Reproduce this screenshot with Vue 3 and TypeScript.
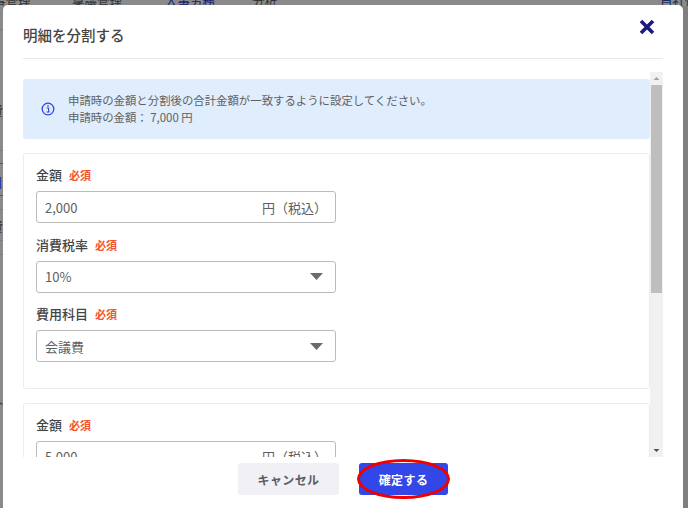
<script setup lang="ts">
interface Field {
  label: string
  value: string
  kind: 'input' | 'select'
}
const first: Field[] = [
  { label: '金額', value: '2,000', kind: 'input' },
  { label: '消費税率', value: '10%', kind: 'select' },
  { label: '費用科目', value: '会議費', kind: 'select' },
]
const second: Field[] = [{ label: '金額', value: '5,000', kind: 'input' }]
const cards = [first, second]
const tabs = ['事管理', '稟議管理', '人事労務', '分析', '自社情報']
const backLines = [
  { y: 29, c: '#7c7c7c' },
  { y: 150, c: '#7c7c7c' },
  { y: 163, c: '#4a55a8' },
  { y: 195, c: '#4a55a8' },
  { y: 209, c: '#7c7c7c' },
  { y: 240, c: '#7c7c7c' },
  { y: 254, c: '#7c7c7c' },
]
const backGlyphs = [
  { y: 102, t: '費', c: '#3a3a3a' },
  { y: 174, t: '目', c: '#2230b0' },
  { y: 218, t: '費', c: '#3a3a3a' },
  { y: 322, t: '^', c: '#3a3a3a' },
  { y: 397, t: '介', c: '#3a3a3a' },
]
</script>

<template>
  <div class="page">
    <nav class="tabs">
      <span v-for="(t, i) in tabs" :key="t" class="tab" :class="'tab' + i">{{ t }}</span>
    </nav>
    <div v-for="l in backLines" :key="l.y" class="back-line" :style="{ top: l.y + 'px', background: l.c }"></div>
    <span v-for="g in backGlyphs" :key="g.y" class="back-glyph" :style="{ top: g.y + 'px', color: g.c }">{{ g.t }}</span>
    <div class="right-strip"></div>
    <section class="modal">
      <header class="head">
        <h2 class="title">明細を分割する</h2>
        <svg class="close" width="16" height="16" viewBox="0 0 16 16">
          <path d="M2 2 L14 14 M14 2 L2 14" stroke="#1a1a80" stroke-width="3.6" fill="none" />
        </svg>
      </header>
      <div class="body">
        <div class="scroll">
          <div class="alert">
            <svg class="info" width="14" height="14" viewBox="0 0 14 14">
              <circle cx="7" cy="7" r="5.8" fill="none" stroke="#3346e8" stroke-width="1.3" />
              <rect x="6.3" y="3.2" width="1.4" height="1.5" fill="#3346e8" />
              <path d="M5.6 6 H7.6 V9.8 H8.6 M5.5 10 H8.6" stroke="#3346e8" stroke-width="1.1" fill="none" />
            </svg>
            <div class="alert-text">
              <p>申請時の金額と分割後の合計金額が一致するように設定してください。</p>
              <p>申請時の金額： 7,000 円</p>
            </div>
          </div>
          <div v-for="(card, c) in cards" :key="c" class="card">
            <div v-for="f in card" :key="f.label" class="field">
              <div class="label">{{ f.label }}<span class="req">必須</span></div>
              <div class="control">
                <span>{{ f.value }}</span>
                <span v-if="f.kind === 'input'" class="unit">円（税込）</span>
                <svg v-else class="caret" width="13" height="7" viewBox="0 0 13 7">
                  <path d="M0 0 H13 L6.5 7 Z" fill="#6b6b6b" />
                </svg>
              </div>
            </div>
          </div>
        </div>
        <div class="bar">
          <svg class="arrow" width="13" height="13" viewBox="0 0 13 13"><path d="M3.5 8 H9.5 L6.5 5 Z" fill="#a3a3a3" /></svg>
          <div class="track"><div class="thumb"></div></div>
          <svg class="arrow" width="13" height="13" viewBox="0 0 13 13"><path d="M3.5 5 H9.5 L6.5 8 Z" fill="#505050" /></svg>
        </div>
      </div>
      <footer class="foot">
        <button class="btn cancel">キャンセル</button>
        <button class="btn ok">確定する<span class="ring"></span></button>
      </footer>
    </section>
  </div>
</template>

<style scoped>
.page {
  position: relative;
  width: 688px;
  height: 508px;
  overflow: hidden;
  background: #8a8a8a;
  font-family: "Noto Sans CJK JP", "Noto Sans", sans-serif;
}
.tabs {
  position: absolute;
  top: -6px;
  left: 0;
  width: 100%;
  height: 14px;
  font-size: 12.5px;
  line-height: 14px;
  color: #333;
}
.tab {
  position: absolute;
  top: 0;
  white-space: nowrap;
}
.tab0 { left: -7px; }
.tab1 { left: 72px; }
.tab2 { left: 165px; color: #1c1c70; }
.tab3 { left: 252px; }
.tab4 { left: 660px; color: #1c2c60; }
.back-line {
  position: absolute;
  left: 0;
  width: 3px;
  height: 1px;
}
.back-glyph {
  position: absolute;
  left: -10px;
  font-size: 13px;
  line-height: 16px;
}
.right-strip {
  position: absolute;
  right: 0;
  top: 6px;
  bottom: 0;
  width: 6px;
  background: #7f7f7f;
}
.modal {
  position: absolute;
  left: 3px;
  top: 5px;
  width: 680px;
  height: 510px;
  background: #fff;
  border-radius: 5px 5px 0 0;
  padding: 0 20px;
  box-sizing: border-box;
}
.head {
  height: 53px;
  border-bottom: 1px solid #e8e8e8;
  display: flex;
  align-items: center;
  justify-content: space-between;
  position: relative;
}
.title {
  margin: 0;
  font-size: 14.5px;
  font-weight: 500;
  color: #444;
  line-height: 20px;
  padding-top: 7px;
}
.close {
  position: absolute;
  right: 8px;
  top: 14px;
}
.body {
  display: flex;
  height: 385px;
  margin-top: 13px;
  overflow: hidden;
}
.scroll {
  width: 627px;
  flex: none;
  padding-top: 7px;
  overflow: hidden;
}
.alert {
  height: 60px;
  background: #e0edfd;
  border-radius: 3px;
  display: flex;
  align-items: center;
  padding-left: 18px;
  box-sizing: border-box;
}
.info { flex: none; }
.alert-text {
  margin-left: 13px;
  font-size: 11.4px;
  line-height: 17.5px;
  color: #606060;
}
.alert-text p { margin: 0; }
.card {
  margin-top: 14px;
  height: 236px;
  box-sizing: border-box;
  border: 1px solid #ececec;
  border-radius: 3px;
  padding: 11px 12px 0;
}
.card + .card { margin-top: 13.5px; }
.field { margin-bottom: 11.5px; width: 300px; }
.label {
  font-size: 13px;
  font-weight: 500;
  line-height: 19px;
  color: #444;
  height: 19px;
  margin-bottom: 7px;
}
.req {
  margin-left: 7px;
  font-size: 11px;
  font-weight: 700;
  color: #f4532f;
}
.control {
  height: 32px;
  box-sizing: border-box;
  border: 1px solid #bcbcbc;
  border-radius: 3px;
  display: flex;
  align-items: center;
  justify-content: space-between;
  padding: 0 12px 0 8px;
  font-size: 13px;
  color: #606060;
}
.unit {
  font-size: 13px;
  margin-right: 2px;
  width: 59px;
  white-space: nowrap;
}
.caret { flex: none; }
.bar {
  width: 13px;
  flex: none;
  background: #f1f1f1;
  display: flex;
  flex-direction: column;
}
.arrow { flex: none; display: block; }
.track { flex: 1; padding: 0 1px; }
.thumb { height: 208px; background: #bebebe; }
.foot {
  display: flex;
  justify-content: center;
  gap: 20px;
  margin-top: 6px;
}
.btn {
  position: relative;
  height: 32px;
  border: 0;
  border-radius: 3px;
  font-family: inherit;
  font-size: 12px;
  font-weight: 700;
  letter-spacing: 0.4px;
  padding: 0;
}
.cancel { width: 101px; background: #f1f1f5; color: #5c5c66; }
.ok { width: 89px; background: #3346e8; color: #fff; }
.ring {
  position: absolute;
  left: -2px;
  top: -4px;
  width: 93px;
  height: 40px;
  box-sizing: border-box;
  border: 3.5px solid #f00000;
  border-radius: 50%;
}
</style>

<style>
html, body { margin: 0; padding: 0; overflow: hidden; }
</style>
